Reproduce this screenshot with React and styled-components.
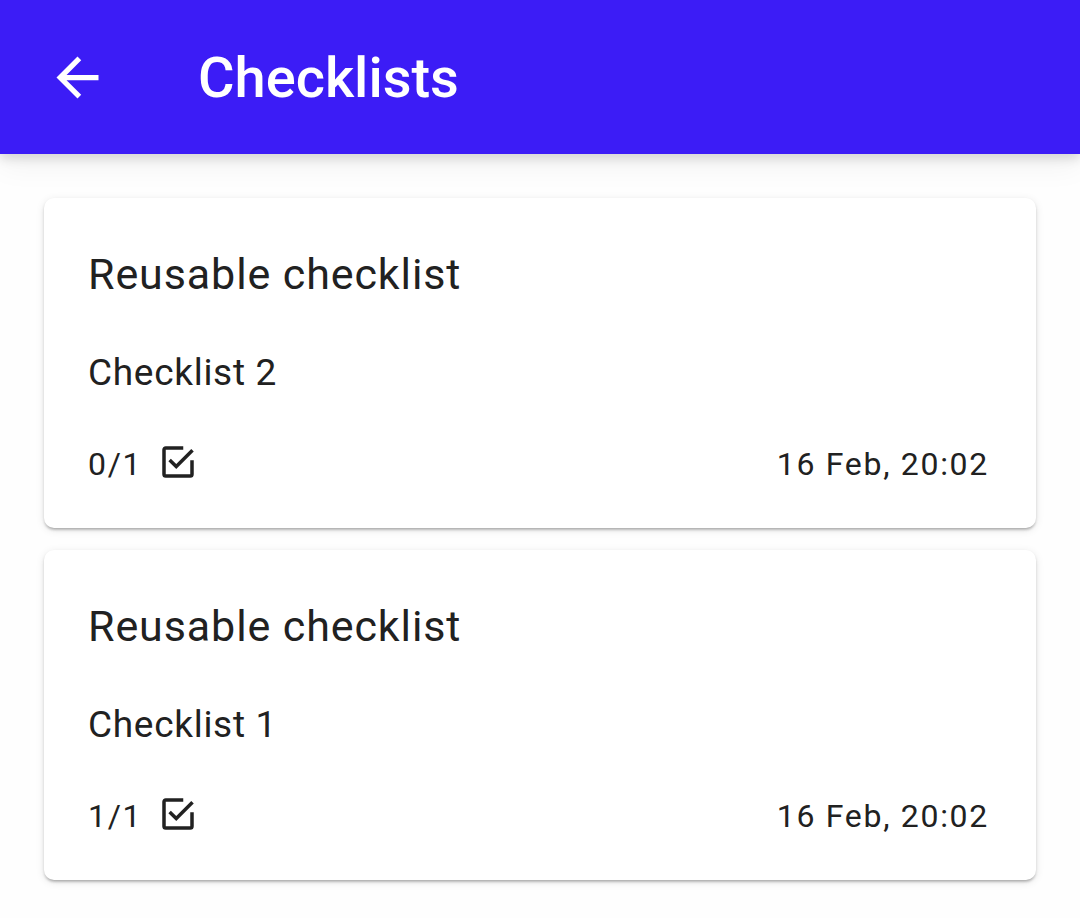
import React from 'react'
import styled, { createGlobalStyle } from 'styled-components'

const GlobalStyle = createGlobalStyle`
  html, body {
    margin: 0;
    padding: 0;
    background: #fefefe;
    font-family: Roboto, "Noto Sans", sans-serif;
    color: #212121;
  }
`

const Page = styled.div`
  width: 1080px;
  min-height: 918px;
  background: #fefefe;
  overflow: hidden;
`

const AppBar = styled.header`
  position: relative;
  z-index: 1;
  height: 154px;
  display: flex;
  align-items: center;
  background: #3c1cf6;
  color: #ffffff;
  box-shadow: 0 5px 10px rgba(0, 0, 0, 0.12), 0 10px 30px rgba(0, 0, 0, 0.06);
`

const BackButton = styled.button`
  appearance: none;
  border: none;
  background: transparent;
  padding: 0;
  margin-left: 46px;
  width: 63px;
  height: 63px;
  display: flex;
  align-items: center;
  justify-content: center;
  color: #ffffff;
`

const Title = styled.h1`
  margin: 2px 0 0 89px;
  font-size: 56px;
  font-weight: 500;
  line-height: 1;
  letter-spacing: 0;
`

const List = styled.main`
  display: flex;
  flex-direction: column;
  gap: 22px;
  padding: 44px 44px 0 44px;
`

const Card = styled.section`
  background: #ffffff;
  border-radius: 10px;
  padding: 51px 47px 41px 44px;
  box-shadow: 0 3px 3px -2px rgba(0, 0, 0, 0.2), 0 2px 3px rgba(0, 0, 0, 0.14),
    0 2px 8px rgba(0, 0, 0, 0.1);
`

const CardTitle = styled.div`
  font-size: 43px;
  line-height: 50px;
  font-weight: 400;
  letter-spacing: 0.9px;
`

const CardName = styled.div`
  margin-top: 52px;
  font-size: 37px;
  line-height: 44px;
  letter-spacing: 0.7px;
`

const Footer = styled.div`
  margin-top: 46px;
  display: flex;
  align-items: center;
  justify-content: space-between;
`

const Progress = styled.div`
  display: flex;
  align-items: center;
  gap: 15px;
`

const Meta = styled.span`
  font-size: 32px;
  line-height: 38px;
  letter-spacing: 1.7px;
`

const CheckIcon = styled.svg`
  width: 42px;
  height: 42px;
  margin-bottom: 4px;
  fill: #212121;
`

const ArrowBack = () => (
  <svg width="63" height="63" viewBox="0 0 24 24" fill="#ffffff">
    <path d="M20 11H7.83l5.59-5.59L12 4l-8 8 8 8 1.41-1.41L7.83 13H20v-2z" />
  </svg>
)

const checklists = [
  { id: 2, name: 'Checklist 2', done: 0, total: 1, date: '16 Feb, 20:02' },
  { id: 1, name: 'Checklist 1', done: 1, total: 1, date: '16 Feb, 20:02' },
]

const ChecklistCard = ({ item }) => (
  <Card>
    <CardTitle>Reusable checklist</CardTitle>
    <CardName>{item.name}</CardName>
    <Footer>
      <Progress>
        <Meta>
          {item.done}/{item.total}
        </Meta>
        <CheckIcon viewBox="0 0 24 24">
          <path d="M19,19H5V5H15V3H5C3.89,3 3,3.89 3,5V19A2,2 0 0,0 5,21H19A2,2 0 0,0 21,19V11H19M7.91,10.08L6.5,11.5L11,16L21,6L19.59,4.58L11,13.17L7.91,10.08Z" />
        </CheckIcon>
      </Progress>
      <Meta>{item.date}</Meta>
    </Footer>
  </Card>
)

export default function App() {
  return (
    <Page>
      <GlobalStyle />
      <AppBar>
        <BackButton aria-label="Back">
          <ArrowBack />
        </BackButton>
        <Title>Checklists</Title>
      </AppBar>
      <List>
        {checklists.map((item) => (
          <ChecklistCard key={item.id} item={item} />
        ))}
      </List>
    </Page>
  )
}
